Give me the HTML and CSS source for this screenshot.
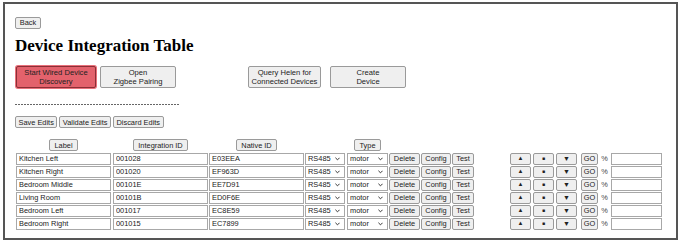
FILE: index.html
```html
<!DOCTYPE html>
<html>
<head>
<meta charset="utf-8">
<link rel="stylesheet" href="styles.css">
</head>
<body>
<div class="frame">
  <div class="top"><button class="btn small back">Back</button></div>
  <h1 class="title">Device Integration Table</h1>
  <div class="actions">
    <div class="group">
      <button class="btn big danger">Start Wired Device<br>Discovery</button>
      <button class="btn big">Open<br>Zigbee Pairing</button>
    </div>
    <div class="group right">
      <button class="btn big q">Query Helen for<br>Connected Devices</button>
      <button class="btn big">Create<br>Device</button>
    </div>
  </div>
  <div class="dash"></div>
  <div class="edits">
    <button class="btn small">Save Edits</button>
    <button class="btn small">Validate Edits</button>
    <button class="btn small">Discard Edits</button>
  </div>
  <div class="table">
    <div class="row head">
      <div class="c label"><button class="btn small">Label</button></div>
      <div class="c iid"><button class="btn small">Integration ID</button></div>
      <div class="c nid"><button class="btn small">Native ID</button></div>
      <div class="c types"><button class="btn small">Type</button></div>
    </div>
    <div class="row">
      <input class="in label" value="Kitchen Left"><input class="in iid" value="001028"><input class="in nid" value="E03EEA">
      <select class="sel bus"><option>RS485</option></select><select class="sel kind"><option>motor</option></select>
      <button class="btn rb del">Delete</button><button class="btn rb cfg">Config</button><button class="btn rb tst">Test</button>
      <span class="ctl"><button class="btn rb arr up">▲</button><button class="btn rb arr st">■</button><button class="btn rb arr dn">▼</button></span>
      <button class="btn rb go">GO</button><span class="pct">%</span><input class="in pin" value="">
    </div>
    <div class="row">
      <input class="in label" value="Kitchen Right"><input class="in iid" value="001020"><input class="in nid" value="EF963D">
      <select class="sel bus"><option>RS485</option></select><select class="sel kind"><option>motor</option></select>
      <button class="btn rb del">Delete</button><button class="btn rb cfg">Config</button><button class="btn rb tst">Test</button>
      <span class="ctl"><button class="btn rb arr up">▲</button><button class="btn rb arr st">■</button><button class="btn rb arr dn">▼</button></span>
      <button class="btn rb go">GO</button><span class="pct">%</span><input class="in pin" value="">
    </div>
    <div class="row">
      <input class="in label" value="Bedroom Middle"><input class="in iid" value="00101E"><input class="in nid" value="EE7D91">
      <select class="sel bus"><option>RS485</option></select><select class="sel kind"><option>motor</option></select>
      <button class="btn rb del">Delete</button><button class="btn rb cfg">Config</button><button class="btn rb tst">Test</button>
      <span class="ctl"><button class="btn rb arr up">▲</button><button class="btn rb arr st">■</button><button class="btn rb arr dn">▼</button></span>
      <button class="btn rb go">GO</button><span class="pct">%</span><input class="in pin" value="">
    </div>
    <div class="row">
      <input class="in label" value="Living Room"><input class="in iid" value="00101B"><input class="in nid" value="ED0F6E">
      <select class="sel bus"><option>RS485</option></select><select class="sel kind"><option>motor</option></select>
      <button class="btn rb del">Delete</button><button class="btn rb cfg">Config</button><button class="btn rb tst">Test</button>
      <span class="ctl"><button class="btn rb arr up">▲</button><button class="btn rb arr st">■</button><button class="btn rb arr dn">▼</button></span>
      <button class="btn rb go">GO</button><span class="pct">%</span><input class="in pin" value="">
    </div>
    <div class="row">
      <input class="in label" value="Bedroom Left"><input class="in iid" value="001017"><input class="in nid" value="EC8E59">
      <select class="sel bus"><option>RS485</option></select><select class="sel kind"><option>motor</option></select>
      <button class="btn rb del">Delete</button><button class="btn rb cfg">Config</button><button class="btn rb tst">Test</button>
      <span class="ctl"><button class="btn rb arr up">▲</button><button class="btn rb arr st">■</button><button class="btn rb arr dn">▼</button></span>
      <button class="btn rb go">GO</button><span class="pct">%</span><input class="in pin" value="">
    </div>
    <div class="row">
      <input class="in label" value="Bedroom Right"><input class="in iid" value="001015"><input class="in nid" value="EC7899">
      <select class="sel bus"><option>RS485</option></select><select class="sel kind"><option>motor</option></select>
      <button class="btn rb del">Delete</button><button class="btn rb cfg">Config</button><button class="btn rb tst">Test</button>
      <span class="ctl"><button class="btn rb arr up">▲</button><button class="btn rb arr st">■</button><button class="btn rb arr dn">▼</button></span>
      <button class="btn rb go">GO</button><span class="pct">%</span><input class="in pin" value="">
    </div>
  </div>
</div>
</body>
</html>
```
FILE: styles.css
```css
* { box-sizing: border-box; }
body { margin: 0; background: #fff; font-family: "Liberation Sans", Arial, sans-serif; }
.frame {
  margin: 2px 5px 0 3px;
  height: 238px;
  border: 2px solid #555;
  padding: 7px 10px 0 10px;
}
.btn {
  font-family: "Liberation Sans", Arial, sans-serif;
  font-size: 7.4px;
  color: #222;
  background: #efefef;
  border: 1px solid #9a9a9a;
  border-radius: 2px;
  padding: 0 2px;
  margin: 0;
  line-height: 9px;
  white-space: nowrap;
}
.btn.small { height: 12px; }
.btn.back { width: 26px; padding: 0; }
.top { height: 12px; }
.title {
  font-family: "Liberation Serif", "Times New Roman", serif;
  font-size: 17px;
  font-weight: bold;
  margin: 13px 0 0 0;
  line-height: 20px;
  color: #000;
}
.actions { display: flex; margin-top: 10px; gap: 72px; }
.group { display: flex; gap: 3px; }
.btn.big { height: 22px; width: 76px; line-height: 9px; color: #222; font-size: 7.6px; padding: 0; }
.btn.q { width: 73px; margin-right: 6px; }
.btn.danger {
  background: #e3626c;
  border: 1px solid #8b2f36;
  box-shadow: 0 0 0 1px #e8707a;
  width: 80px;
  margin-left: 1px;
  margin-right: 1px;
}
.dash {
  width: 164px;
  height: 1px;
  margin-top: 16px;
  background: repeating-linear-gradient(to right, #666 0 2px, transparent 2px 3px);
}
.edits { display: flex; gap: 2px; margin-top: 11px; }
.edits .btn { padding: 0 2.5px; }
.table { margin-top: 11px; }
.row { display: flex; align-items: center; height: 13px; }
.row.head { height: 12px; margin-bottom: 1px; }
.row.head .btn { padding: 0 4px; }
.c { display: flex; justify-content: center; }
.c.label { width: 95px; margin-left: 1px; }
.c.iid { width: 95px; margin-left: 2px; }
.c.nid { width: 95px; margin-left: 1px; }
.c.types { width: 41px; margin-left: 43px; }
.in {
  font-family: "Liberation Sans", Arial, sans-serif;
  font-size: 7.4px;
  color: #222;
  height: 12px;
  border: 1px solid #a8a8a8;
  padding: 0 2px;
  margin: 0;
  background: #fff;
  outline: none;
}
.in.label { width: 95px; margin-left: 1px; }
.in.iid { width: 95px; margin-left: 2px; }
.in.nid { width: 95px; margin-left: 1px; }
.sel {
  -webkit-appearance: none;
  appearance: none;
  font-family: "Liberation Sans", Arial, sans-serif;
  font-size: 7.4px;
  color: #222;
  height: 12px;
  border: 1px solid #a8a8a8;
  padding: 0 0 0 2px;
  margin: 0;
  background: #fff url("data:image/svg+xml,%3Csvg xmlns='http://www.w3.org/2000/svg' width='6' height='4' viewBox='0 0 6 4'%3E%3Cpath d='M0.5 0.5 L3 3 L5.5 0.5' fill='none' stroke='%23333' stroke-width='1.2'/%3E%3C/svg%3E") no-repeat right 4px center;
  background-size: 5px 4px;
}
.sel.bus { width: 40px; margin-left: 1px; }
.sel.kind { width: 41px; margin-left: 2px; }
.btn.rb { height: 12px; }
.del { width: 31px; margin-left: 1px; }
.cfg { width: 30px; margin-left: 1px; }
.tst { width: 22px; margin-left: 1px; }
.ctl { display: flex; gap: 2px; margin-left: 36px; }
.arr { width: 21px; padding: 0; }
.arr.up { font-size: 6px; }
.arr.st { font-size: 5px; }
.arr.dn { font-size: 7px; }
.go { width: 17px; margin-left: 4px; padding: 0; }
.pct { font-size: 7.4px; color: #444; width: 13px; text-align: center; }
.in.pin { width: 51px; }
```
